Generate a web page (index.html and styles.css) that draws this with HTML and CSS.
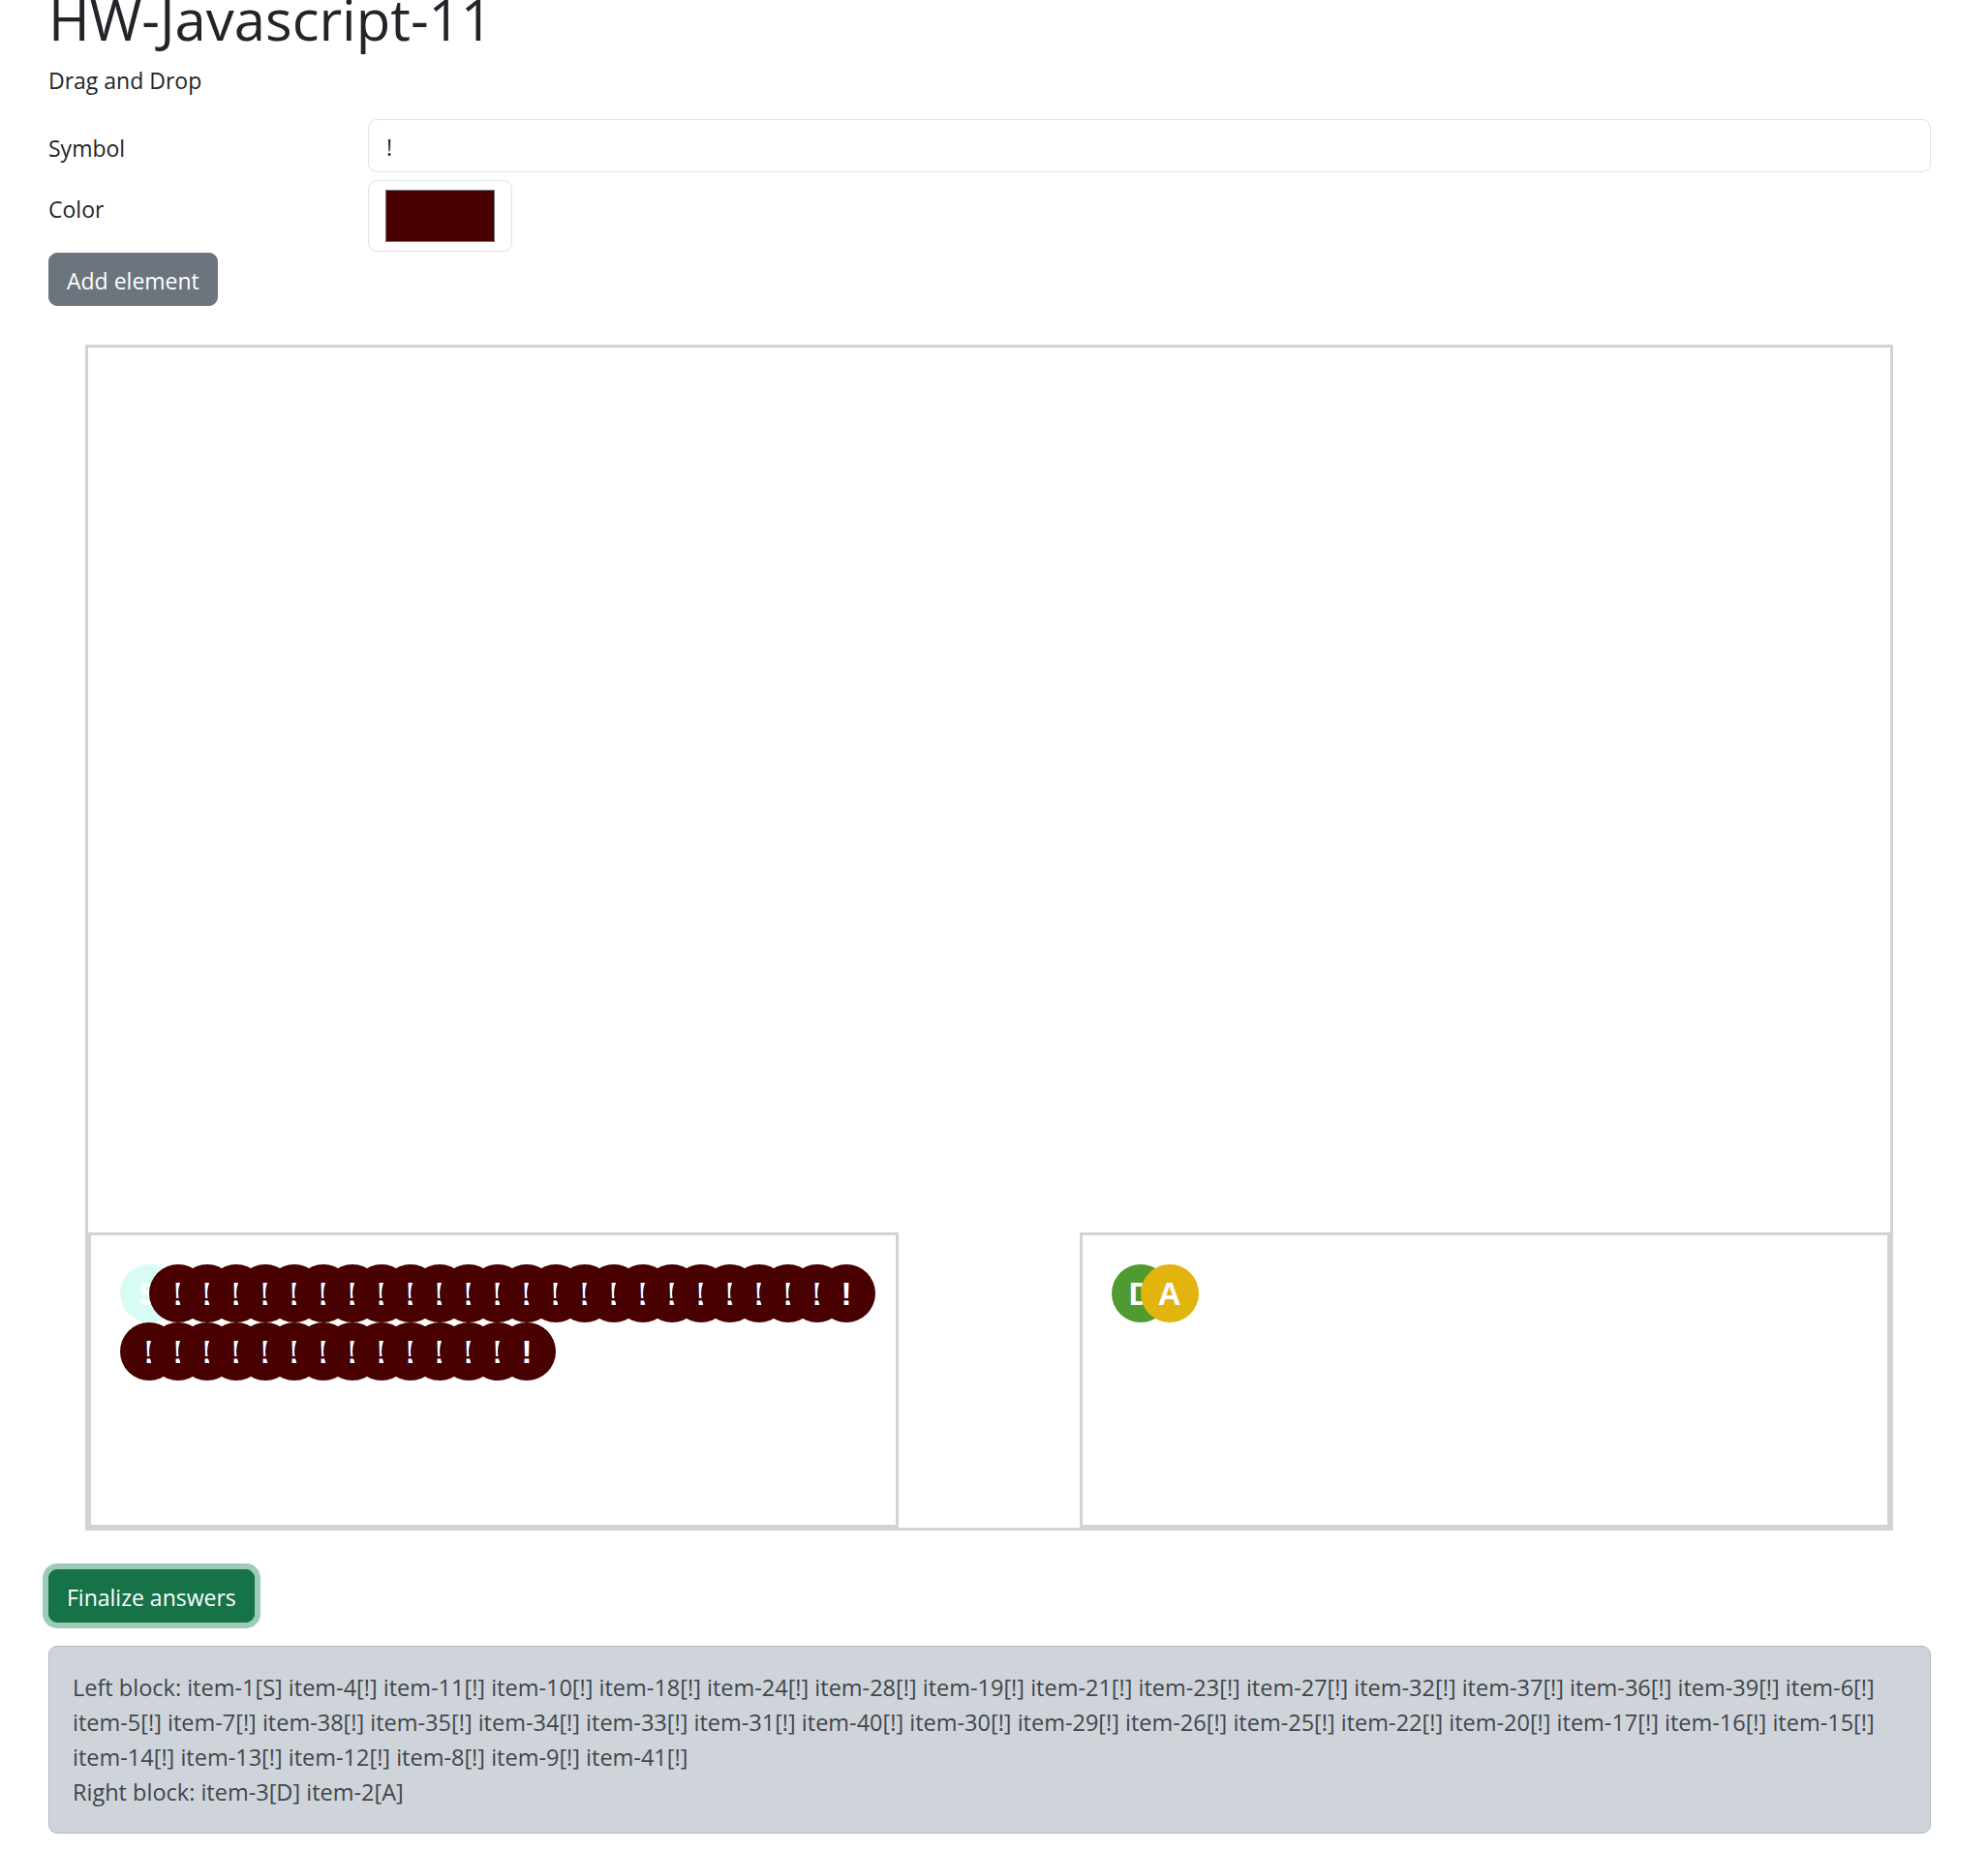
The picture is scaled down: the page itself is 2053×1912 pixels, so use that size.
FILE: index.html
```html
<!DOCTYPE html>
<html lang="en">
<head>
<meta charset="utf-8">
<title>HW-Javascript-11</title>
<link rel="stylesheet" href="styles.css">
</head>
<body>
<div class="page">
  <h1 class="title">HW-Javascript-11</h1>
  <p class="subtitle">Drag and Drop</p>
  <form class="add-form">
    <div class="form-row">
      <label class="form-label" for="symbol">Symbol</label>
      <input class="text-input" id="symbol" type="text" value="!">
    </div>
    <div class="form-row form-row-color">
      <label class="form-label" for="color">Color</label>
      <div><input class="color-input" id="color" type="color" value="#480000"></div>
    </div>
    <button class="btn btn-secondary" type="button">Add element</button>
  </form>

  <div class="board">
    <div class="blocks">
      <div class="block">
        <div class="item item-s">S</div>
        <div class="item item-dark">!</div><div class="item item-dark">!</div><div class="item item-dark">!</div><div class="item item-dark">!</div>
        <div class="item item-dark">!</div><div class="item item-dark">!</div><div class="item item-dark">!</div><div class="item item-dark">!</div>
        <div class="item item-dark">!</div><div class="item item-dark">!</div><div class="item item-dark">!</div><div class="item item-dark">!</div>
        <div class="item item-dark">!</div><div class="item item-dark">!</div><div class="item item-dark">!</div><div class="item item-dark">!</div>
        <div class="item item-dark">!</div><div class="item item-dark">!</div><div class="item item-dark">!</div><div class="item item-dark">!</div>
        <div class="item item-dark">!</div><div class="item item-dark">!</div><div class="item item-dark">!</div><div class="item item-dark">!</div>
        <div class="item item-dark">!</div><div class="item item-dark">!</div><div class="item item-dark">!</div><div class="item item-dark">!</div>
        <div class="item item-dark">!</div><div class="item item-dark">!</div><div class="item item-dark">!</div><div class="item item-dark">!</div>
        <div class="item item-dark">!</div><div class="item item-dark">!</div><div class="item item-dark">!</div><div class="item item-dark">!</div>
        <div class="item item-dark">!</div><div class="item item-dark">!</div>
      </div>
      <div class="block">
        <div class="item item-green">D</div>
        <div class="item item-yellow">A</div>
      </div>
    </div>
  </div>

  <button class="btn btn-success" type="button">Finalize answers</button>

  <div class="result">
    <div>Left block: <span class="tok">item-1[S]</span> <span class="tok">item-4[!]</span> <span class="tok">item-11[!]</span> <span class="tok">item-10[!]</span> <span class="tok">item-18[!]</span> <span class="tok">item-24[!]</span> <span class="tok">item-28[!]</span> <span class="tok">item-19[!]</span> <span class="tok">item-21[!]</span> <span class="tok">item-23[!]</span> <span class="tok">item-27[!]</span> <span class="tok">item-32[!]</span> <span class="tok">item-37[!]</span> <span class="tok">item-36[!]</span> <span class="tok">item-39[!]</span> <span class="tok">item-6[!]</span> <span class="tok">item-5[!]</span> <span class="tok">item-7[!]</span> <span class="tok">item-38[!]</span> <span class="tok">item-35[!]</span> <span class="tok">item-34[!]</span> <span class="tok">item-33[!]</span> <span class="tok">item-31[!]</span> <span class="tok">item-40[!]</span> <span class="tok">item-30[!]</span> <span class="tok">item-29[!]</span> <span class="tok">item-26[!]</span> <span class="tok">item-25[!]</span> <span class="tok">item-22[!]</span> <span class="tok">item-20[!]</span> <span class="tok">item-17[!]</span> <span class="tok">item-16[!]</span> <span class="tok">item-15[!]</span> <span class="tok">item-14[!]</span> <span class="tok">item-13[!]</span> <span class="tok">item-12[!]</span> <span class="tok">item-8[!]</span> <span class="tok">item-9[!]</span> <span class="tok">item-41[!]</span></div>
    <div>Right block: <span class="tok">item-3[D]</span> <span class="tok">item-2[A]</span></div>
  </div>
</div>
</body>
</html>
```
FILE: styles.css
```css
* { box-sizing: border-box; }

html, body {
  margin: 0;
  padding: 0;
  background: #fff;
}

body {
  font-family: "Open Sans", "Noto Sans", sans-serif;
  font-size: 23px;
  line-height: 36px;
  color: #212529;
}

.page {
  padding: 0 59px 20px 50px;
}

.title {
  font-size: 58px;
  line-height: 67px;
  font-weight: 500;
  margin: -14px 0 12px;
  color: #212529;
}

.subtitle {
  margin: 0 0 22px;
}

.add-form {
  display: flex;
  flex-direction: column;
  align-items: flex-start;
}

.form-row {
  display: grid;
  grid-template-columns: 294px 1fr;
  column-gap: 36px;
  width: 100%;
  margin-bottom: 8px;
}

.form-row-color {
  margin-bottom: 0;
}

.form-label {
  padding-top: 12px;
  line-height: 36px;
}

.text-input {
  display: block;
  width: 100%;
  height: 55px;
  padding: 10px 18px 7px;
  font: inherit;
  line-height: 36px;
  color: #212529;
  background: #fff;
  border: 1px solid #dee2e6;
  border-radius: 9px;
  outline: none;
}

.color-input {
  display: block;
  width: 149px;
  height: 74px;
  padding: 9px 17px;
  background: #fff;
  border: 1px solid #dee2e6;
  border-radius: 9px;
  cursor: pointer;
  -webkit-appearance: none;
  appearance: none;
}

.color-input::-webkit-color-swatch-wrapper {
  padding: 0;
}

.color-input::-webkit-color-swatch {
  border: 1px solid #767676;
  border-radius: 0;
}

.btn {
  display: inline-block;
  font: inherit;
  line-height: 36px;
  padding: 10px 18px 7px;
  border: 1px solid transparent;
  border-radius: 9px;
  color: #fff;
  cursor: pointer;
}

.btn-secondary {
  margin-top: 1px;
  background: #6c757d;
  border-color: #6c757d;
}

.btn-success {
  background: #157347;
  border-color: #146c43;
  box-shadow: 0 0 0 6px rgba(60, 153, 110, 0.5);
  margin-bottom: 24px;
}

.board {
  height: 1225px;
  margin: 40px 39px 40px 38px;
  border: 3px solid #d3d3d3;
  display: flex;
  flex-direction: column;
  justify-content: flex-end;
}

.blocks {
  display: flex;
  justify-content: space-between;
}

.block {
  width: 45%;
  height: 305px;
  border: 3px solid #d3d3d3;
  padding: 30px;
  display: flex;
  flex-wrap: wrap;
  align-content: flex-start;
}

.item {
  flex: none;
  width: 60px;
  height: 60px;
  margin-right: -30px;
  border-radius: 50%;
  display: flex;
  align-items: center;
  justify-content: center;
  font-family: "Liberation Sans", Arial, sans-serif;
  font-weight: 700;
  font-size: 33px;
  line-height: 1;
  color: #fff;
}

.item-s { background: #d8fcf4; }
.item-dark { background: #480000; }
.item-green { background: #509b30; }
.item-yellow { background: #e2b40e; }

.result {
  padding: 24px;
  background: #ced4da;
  border: 1px solid #b3b9c0;
  border-radius: 9px;
  color: #41464b;
  font-size: 23.5px;
}

.tok {
  white-space: nowrap;
}
```
